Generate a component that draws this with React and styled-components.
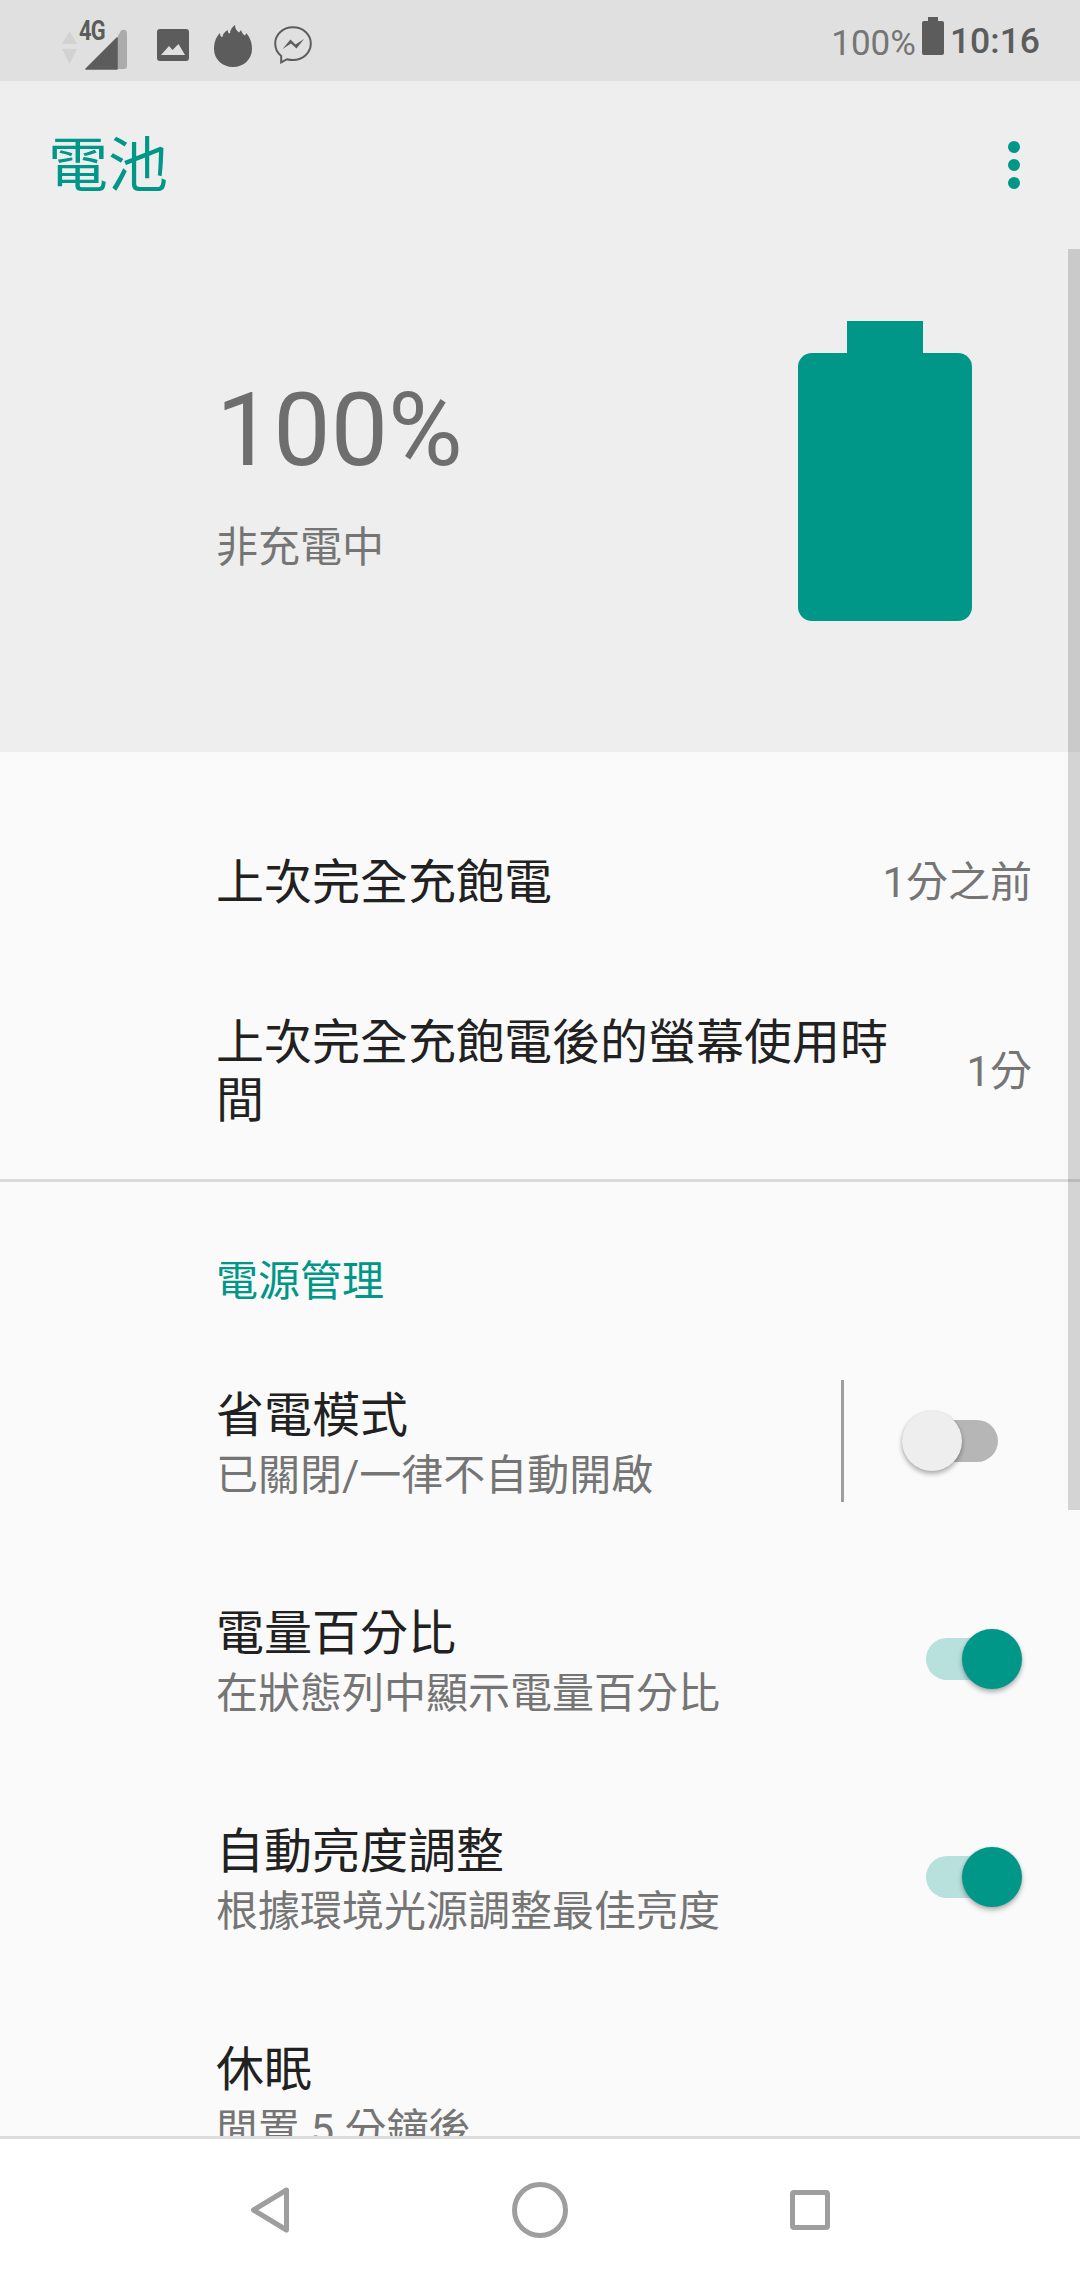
import React from 'react';
import styled, { createGlobalStyle } from 'styled-components';

const GlobalStyle = createGlobalStyle`
  html, body {
    margin: 0;
    padding: 0;
    background: #fafafa;
  }
  * {
    box-sizing: border-box;
  }
`;

const TEAL = '#009688';

function App() {
  return (
    <>
      <GlobalStyle />
      <Page>
        <StatusBar>
          <StatusLeft>
            <DataIcon />
            <ImageIcon />
            <FlameIcon />
            <MessengerIcon />
          </StatusLeft>
          <StatusRight>
            <StatusPercent>100%</StatusPercent>
            <BatteryIcon />
            <Clock>10:16</Clock>
          </StatusRight>
        </StatusBar>

        <Screen>
          <ScrollThumb />
          <AppBar>
            <AppTitle>電池</AppTitle>
            <svg width="12" height="48" viewBox="0 0 12 48">
              <circle cx="6" cy="6" r="6" fill={TEAL} />
              <circle cx="6" cy="24" r="6" fill={TEAL} />
              <circle cx="6" cy="42" r="6" fill={TEAL} />
            </svg>
          </AppBar>

          <Hero>
            <HeroText>
              <HeroLevel>100%</HeroLevel>
              <HeroState>非充電中</HeroState>
            </HeroText>
            <BigBattery>
              <BigBatteryCap />
              <BigBatteryBody />
            </BigBattery>
          </Hero>

          <Content>
            <InfoList>
              <InfoRow>
                <RowTitle>上次完全充飽電</RowTitle>
                <InfoValue>1分之前</InfoValue>
              </InfoRow>
              <InfoRow $tall>
                <RowTitle>上次完全充飽電後的螢幕使用時間</RowTitle>
                <InfoValue>1分</InfoValue>
              </InfoRow>
            </InfoList>

            <SectionTitle>電源管理</SectionTitle>

            <SettingRow>
              <RowText>
                <RowTitle>省電模式</RowTitle>
                <RowSummary>已關閉/一律不自動開啟</RowSummary>
              </RowText>
              <RowDivider />
              <Switch />
            </SettingRow>
            <SettingRow>
              <RowText>
                <RowTitle>電量百分比</RowTitle>
                <RowSummary>在狀態列中顯示電量百分比</RowSummary>
              </RowText>
              <Switch $on />
            </SettingRow>
            <SettingRow>
              <RowText>
                <RowTitle>自動亮度調整</RowTitle>
                <RowSummary>根據環境光源調整最佳亮度</RowSummary>
              </RowText>
              <Switch $on />
            </SettingRow>
            <SettingRow>
              <RowText>
                <RowTitle>休眠</RowTitle>
                <RowSummary>閒置 5 分鐘後</RowSummary>
              </RowText>
            </SettingRow>
          </Content>
        </Screen>

        <NavBar>
          <NavCell>
            <svg width="40" height="46" viewBox="0 0 40 46">
              <path
                d="M36.5 3 L3.5 23 L36.5 43 Z"
                fill="none"
                stroke="#9e9e9e"
                strokeWidth="5"
                strokeLinejoin="round"
              />
            </svg>
          </NavCell>
          <NavCell>
            <svg width="56" height="56" viewBox="0 0 56 56">
              <circle cx="28" cy="28" r="25.5" fill="none" stroke="#9e9e9e" strokeWidth="5" />
            </svg>
          </NavCell>
          <NavCell>
            <svg width="40" height="40" viewBox="0 0 40 40">
              <rect x="2.5" y="2.5" width="35" height="35" rx="1.5" fill="none" stroke="#9e9e9e" strokeWidth="5" />
            </svg>
          </NavCell>
        </NavBar>
      </Page>
    </>
  );
}

function DataIcon() {
  return (
    <DataWrap>
      <svg width="66" height="42" viewBox="0 0 66 42">
        <path d="M0 15 L7.5 2 L15 15 Z" fill="#d2d2d2" />
        <path d="M0 20 L15 20 L7.5 35 Z" fill="#d2d2d2" />
        <path d="M25 40 L55 9 V40 Z" fill="#5c5c5c" />
        <path d="M55 9 L59 1.5 Q65 -1 65 5 V37 Q65 40 62 40 H55 Z" fill="#ababab" />
        <path d="M24 40 L55 9 V40 Z" fill="#5c5c5c" stroke="#5c5c5c" strokeLinejoin="round" strokeWidth="1.5" />
      </svg>
      <DataLabel>4G</DataLabel>
    </DataWrap>
  );
}

function ImageIcon() {
  return (
    <svg width="32" height="32" viewBox="0 0 32 32">
      <rect width="32" height="32" rx="3" fill="#5c5c5c" />
      <path d="M4 26 L12 17 L15.5 21 L21.5 15 L28 26 Z" fill="#e0e0e0" />
    </svg>
  );
}

function FlameIcon() {
  return (
    <svg width="38" height="42" viewBox="0 0 38 42">
      <path
        d="M19 42 C8 42 0 34 0 24 C0 17 2 12 6 8 C6 11 7 12 8.5 12 C9 8 12 6 14 5 C13.5 7 14.5 8.5 16 8.5 C16 5 18 2 21 0 C21 4 23 6 25 7.5 C26 6.5 26.5 6 27 5 C28 8 29.5 10 31 10.5 C31.5 10 32 9 32 8 C36 12 38 18 38 24 C38 34 30 42 19 42 Z"
        fill="#5c5c5c"
      />
    </svg>
  );
}

function MessengerIcon() {
  return (
    <svg width="38" height="38" viewBox="0 0 38 38">
      <path
        d="M19 1.2 C9 1.2 1.2 8.4 1.2 17.6 C1.2 22.6 3.4 27 7.2 30 V36.4 L13 33.2 C14.9 33.7 16.9 34 19 34 C29 34 36.8 26.8 36.8 17.6 C36.8 8.4 29 1.2 19 1.2 Z"
        fill="none"
        stroke="#5c5c5c"
        strokeWidth="2"
      />
      <path d="M8.5 23 L16.5 13.5 L21.5 18.5 L30 13 L22.5 22.5 L17 17.5 Z" fill="#5c5c5c" />
    </svg>
  );
}

function BatteryIcon() {
  return (
    <svg width="22" height="38" viewBox="0 0 22 38">
      <path
        d="M6 0 H16 V4 H20 Q22 4 22 6 V36 Q22 38 20 38 H2 Q0 38 0 36 V6 Q0 4 2 4 H6 Z"
        fill="#5c5c5c"
      />
    </svg>
  );
}

const Page = styled.div`
  width: 1080px;
  height: 2280px;
  display: flex;
  flex-direction: column;
  overflow: hidden;
  background: #fafafa;
  font-family: Roboto, "Noto Sans CJK TC", sans-serif;
`;

const StatusBar = styled.div`
  height: 81px;
  flex: none;
  display: flex;
  justify-content: space-between;
  background: #e0e0e0;
  padding: 0 40px 0 62px;
`;

const StatusLeft = styled.div`
  display: flex;
  align-items: flex-start;
  padding-top: 22px;

  svg:nth-of-type(1) {
    margin: 7px 25px 0 0;
  }

  svg:nth-of-type(2) {
    margin: 3px 22px 0 0;
  }

  svg:nth-of-type(3) {
    margin: 4px 0 0 0;
  }
`;

const DataWrap = styled.div`
  position: relative;
  width: 66px;
  height: 42px;
  margin-right: 29px;
`;

const DataLabel = styled.span`
  position: absolute;
  left: 17px;
  top: -5px;
  font-size: 28px;
  line-height: 28px;
  font-weight: 700;
  letter-spacing: -1px;
  color: #5c5c5c;
  transform: scaleX(0.78);
  transform-origin: left center;
`;

const StatusRight = styled.div`
  display: flex;
  align-items: flex-start;
  padding-top: 17px;
`;

const StatusPercent = styled.span`
  font-size: 35px;
  line-height: 38px;
  margin: 8px 6px 0 0;
  color: #757575;
`;

const Clock = styled.span`
  font-size: 35.5px;
  line-height: 42px;
  font-weight: 500;
  color: #5c5c5c;
  margin: 3px 0 0 6px;
`;

const Screen = styled.div`
  position: relative;
  flex: 1;
  min-height: 0;
  overflow: hidden;
  background: #fafafa;
`;

const ScrollThumb = styled.div`
  position: absolute;
  top: 168px;
  right: 0;
  width: 12px;
  height: 1261px;
  background: rgba(0, 0, 0, 0.15);
  z-index: 2;
`;

const AppBar = styled.div`
  height: 168px;
  display: flex;
  align-items: center;
  justify-content: space-between;
  padding: 0 60px 0 48px;
  background: #eeeeee;
`;

const AppTitle = styled.div`
  font-size: 60px;
  line-height: 80px;
  padding-top: 3px;
  color: ${TEAL};
`;

const Hero = styled.div`
  height: 503px;
  display: flex;
  justify-content: space-between;
  align-items: flex-start;
  padding: 72px 108px 0 216px;
  background: #eeeeee;
`;

const HeroText = styled.div`
  padding-top: 59px;
`;

const HeroLevel = styled.div`
  font-size: 102px;
  line-height: 100px;
  color: #6e6e6e;
`;

const HeroState = styled.div`
  margin-top: 38px;
  font-size: 42px;
  line-height: 60px;
  color: #757575;
`;

const BigBattery = styled.div`
  width: 174px;
  display: flex;
  flex-direction: column;
  align-items: center;
`;

const BigBatteryCap = styled.div`
  width: 76px;
  height: 32px;
  background: ${TEAL};
`;

const BigBatteryBody = styled.div`
  width: 174px;
  height: 268px;
  border-radius: 14px;
  background: ${TEAL};
`;

const Content = styled.div`
  background: #fafafa;
`;

const InfoList = styled.div`
  padding-top: 47px;
  border-bottom: 3px solid #dbdbdb;
`;

const InfoRow = styled.div`
  display: flex;
  align-items: center;
  height: ${(props) => (props.$tall ? '218px' : '162px')};
  padding: ${(props) => (props.$tall ? '4px' : '6px')} 48px 0 216px;
`;

const RowTitle = styled.div`
  flex: 1;
  font-size: 48px;
  line-height: 58px;
  color: #212121;
`;

const InfoValue = styled.div`
  margin-left: 60px;
  font-size: 42px;
  line-height: 58px;
  white-space: nowrap;
  color: #757575;
`;

const SectionTitle = styled.div`
  height: 150px;
  padding: 44px 0 0 216px;
  font-size: 42px;
  line-height: 112px;
  color: ${TEAL};
`;

const SettingRow = styled.div`
  height: 218px;
  display: flex;
  align-items: center;
  padding: 0 82px 0 216px;
`;

const RowText = styled.div`
  flex: 1;
  display: flex;
  flex-direction: column;
  padding-top: 12px;
`;

const RowSummary = styled.div`
  font-size: 42px;
  line-height: 62px;
  color: #757575;
`;

const RowDivider = styled.div`
  width: 3px;
  height: 122px;
  margin-right: 82px;
  background: #9e9e9e;
`;

const SwitchTrack = styled.div`
  position: relative;
  width: 72px;
  height: 42px;
  border-radius: 21px;
  background: ${(props) => (props.$on ? '#b8e0dc' : '#b6b6b6')};
`;

const SwitchThumb = styled.div`
  position: absolute;
  top: -9px;
  ${(props) => (props.$on ? 'right: -24px;' : 'left: -24px;')}
  width: 60px;
  height: 60px;
  border-radius: 50%;
  background: ${(props) => (props.$on ? TEAL : '#eeeeee')};
  box-shadow: 0 0 2px rgba(0, 0, 0, 0.12), 0 3px 5px rgba(0, 0, 0, 0.3);
`;

function Switch({ $on }) {
  return (
    <SwitchTrack $on={$on}>
      <SwitchThumb $on={$on} />
    </SwitchTrack>
  );
}

const NavBar = styled.div`
  position: relative;
  z-index: 3;
  height: 144px;
  flex: none;
  display: grid;
  grid-template-columns: repeat(3, 270px);
  padding: 0 135px;
  background: #ffffff;
  border-top: 3px solid #dcdcdc;
`;

const NavCell = styled.div`
  display: flex;
  align-items: center;
  justify-content: center;
`;

export default App;
